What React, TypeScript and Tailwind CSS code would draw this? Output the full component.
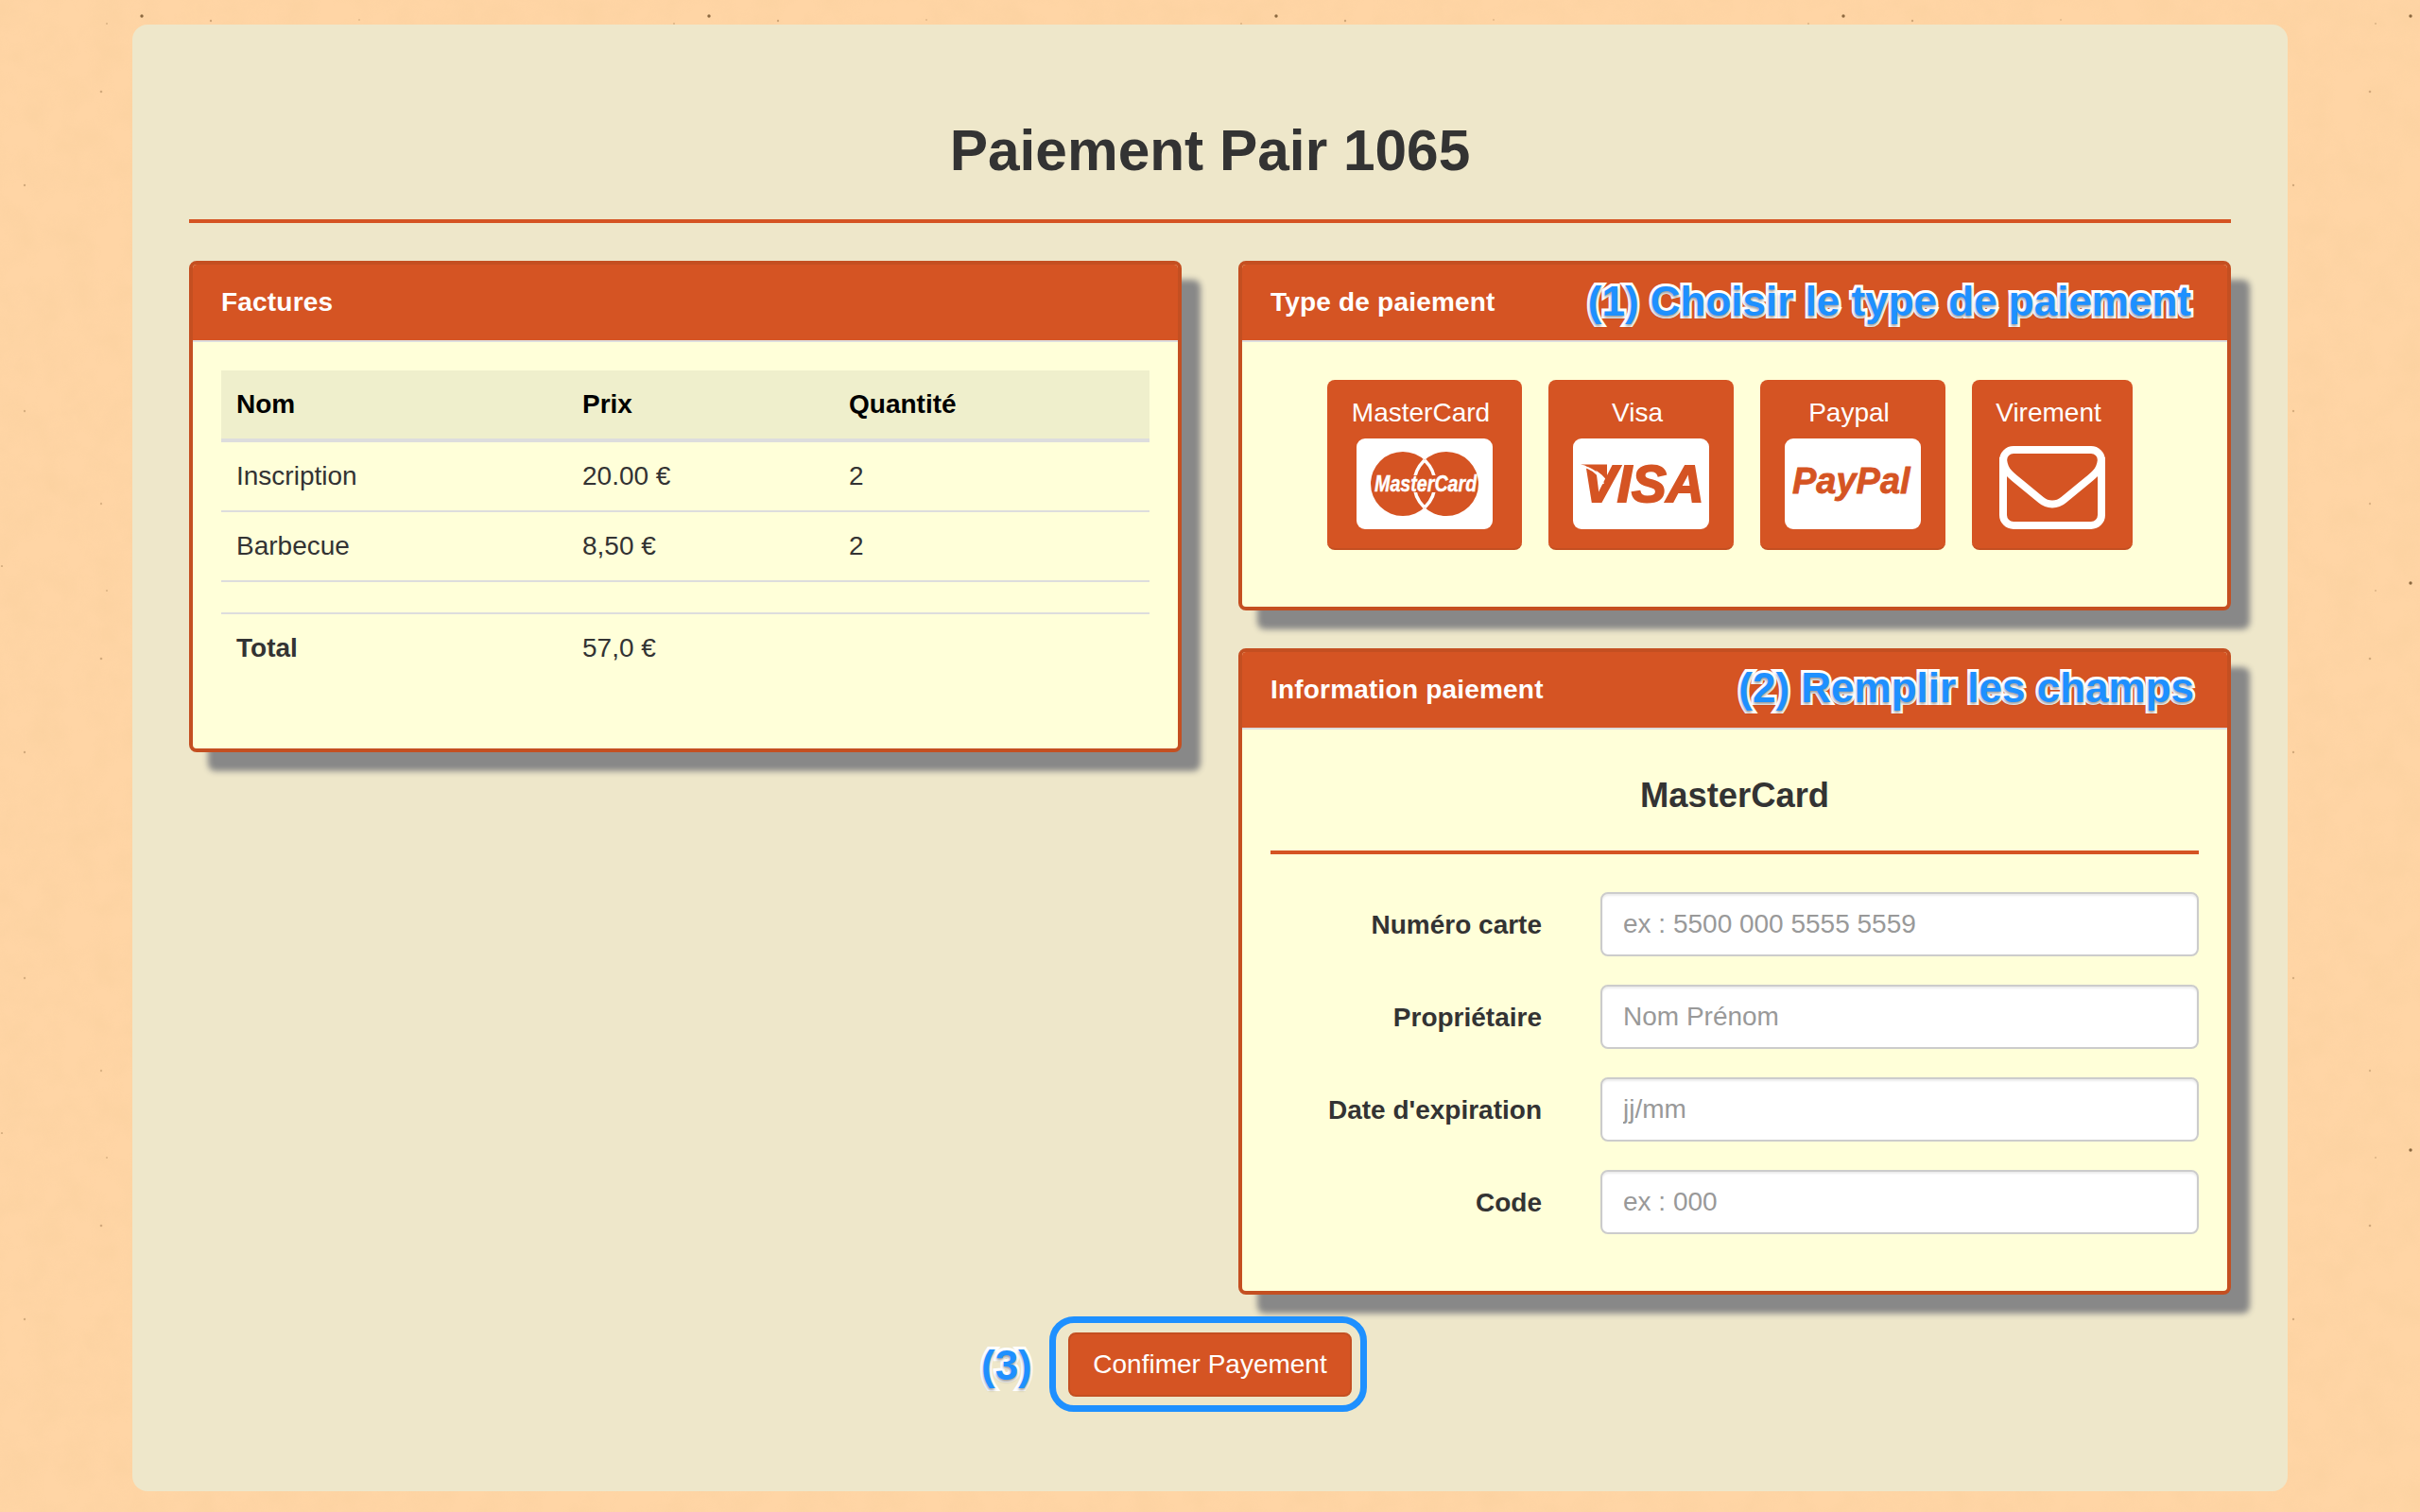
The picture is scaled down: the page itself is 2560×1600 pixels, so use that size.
import React from 'react';

const specks = [
    { x: 150, y: 17, r: 1.7, o: 0.7 },
    { x: 223, y: 22, r: 1.2, o: 0.3 },
    { x: 113, y: 25, r: 1, o: 0.22 },
    { x: 380, y: 21, r: 1, o: 0.18 },
    { x: 107, y: 97, r: 1.3, o: 0.28 },
    { x: 26, y: 196, r: 1.2, o: 0.28 },
    { x: 26, y: 435, r: 1.2, o: 0.25 },
    { x: 107, y: 533, r: 1.2, o: 0.22 },
    { x: 2, y: 599, r: 1.1, o: 0.25 },
];

const PaperBackground = () => (
    <svg className="absolute inset-0 w-full h-full" width="2560" height="1600">
        <defs>
            <pattern id="tile" width="600" height="600" patternUnits="userSpaceOnUse">
                {specks.map((s, idx) => (
                    <circle key={idx} cx={s.x} cy={s.y} r={s.r} fill="#5c3a14" opacity={s.o} />
                ))}
            </pattern>
            <filter id="grain" x="0" y="0" width="100%" height="100%">
                <feTurbulence type="fractalNoise" baseFrequency="0.03" numOctaves="3" seed="4" />
                <feColorMatrix values="0 0 0 0 0.93  0 0 0 0 0.62  0 0 0 0 0.33  1.6 0 0 0 -0.55" />
            </filter>
        </defs>
        <rect width="2560" height="1600" fill="#ffd5a5" />
        <rect width="2560" height="1600" filter="url(#grain)" opacity="0.4" />
        <rect width="2560" height="1600" fill="url(#tile)" />
    </svg>
);

const MasterCardIcon = () => (
    <svg width="144" height="96" viewBox="0 0 144 96">
        <defs>
            <clipPath id="mc-left"><circle cx="49" cy="48" r="34" /></clipPath>
            <clipPath id="mc-right"><circle cx="95" cy="48" r="34" /></clipPath>
        </defs>
        <rect width="144" height="96" rx="9" fill="#fff" />
        <circle cx="49" cy="48" r="34" fill="#d55423" />
        <circle cx="95" cy="48" r="34" fill="#d55423" />
        <circle cx="49" cy="48" r="34" fill="none" stroke="#fff" strokeWidth="3.5" clipPath="url(#mc-right)" />
        <circle cx="95" cy="48" r="34" fill="none" stroke="#fff" strokeWidth="3.5" clipPath="url(#mc-left)" />
        <rect x="44" y="39" width="56" height="18" fill="#d55423" />
        <text transform="translate(19 56) scale(0.82 1)" fontSize="24" fontWeight="700" fontStyle="italic" fill="#fff" stroke="#fff" strokeWidth="0.4">MasterCard</text>
    </svg>
);

const VisaIcon = () => (
    <svg width="144" height="96" viewBox="0 0 144 96">
        <rect width="144" height="96" rx="9" fill="#fff" />
        <text x="10" y="67" fontSize="55" fontWeight="700" fontStyle="italic" fill="#d55423" stroke="#d55423" strokeWidth="2">VISA</text>
        <path d="M8 27.5 L36 27.5 L36 45 C30 36 20 30 8 27.5 Z" fill="#d55423" />
        <path d="M8 29 C20 31 28 37 32 48" fill="none" stroke="#fff" strokeWidth="2" />
    </svg>
);

const PaypalIcon = () => (
    <svg width="144" height="96" viewBox="0 0 144 96">
        <rect width="144" height="96" rx="9" fill="#fff" />
        <text x="8" y="58" fontSize="38" fontWeight="700" fontStyle="italic" fill="#d55423" stroke="#d55423" strokeWidth="0.8">PayPal</text>
    </svg>
);

const EnvelopeIcon = () => (
    <svg width="112" height="88" viewBox="0 0 112 88" fill="none" stroke="#fff" strokeWidth="8">
        <rect x="4" y="4" width="104" height="80" rx="11" />
        <path d="M4 12 C4 24 10 29 16 34 L44 57 C51 63 61 63 68 57 L96 34 C102 29 108 24 108 12" />
    </svg>
);

const paymentTypes = [
    { label: 'MasterCard', width: 'w-[206px]', icon: <MasterCardIcon /> },
    { label: 'Visa', width: 'w-[196px]', icon: <VisaIcon /> },
    { label: 'Paypal', width: 'w-[196px]', icon: <PaypalIcon /> },
    { label: 'Virement', width: 'w-[170px]', icon: <EnvelopeIcon /> },
];

const fields = [
    { label: 'Numéro carte', placeholder: 'ex : 5500 000 5555 5559' },
    { label: 'Propriétaire', placeholder: 'Nom Prénom' },
    { label: "Date d'expiration", placeholder: 'jj/mm' },
    { label: 'Code', placeholder: 'ex : 000' },
];

const noteClass =
    "font-bold text-[44px] leading-[50px] text-[#1e90ff] [-webkit-text-stroke:6px_white] [paint-order:stroke_fill] [text-shadow:0_2px_3px_rgba(0,0,0,0.4)]";

const Panel = ({ title, note, children }: { title: string; note?: React.ReactNode; children: React.ReactNode }) => (
    <div className="bg-[#ffffd9] border-4 border-[#c44f21] rounded-lg shadow-[20px_20px_6px_#888888]">
        <div className="h-[82px] bg-[#d55423] border-b-2 border-[#dddddd] rounded-t-[4px] pl-[30px] flex items-center justify-between">
            <h3 className="text-[28px] font-bold text-white leading-10 tracking-[0.2px]">{title}</h3>
            {note}
        </div>
        {children}
    </div>
);

const App = () => {
    return (
        <div className="relative w-[2560px] h-[1600px] overflow-hidden text-[#333333] text-[28px] leading-10 [font-family:'Liberation_Sans',Arial,sans-serif]">
            <PaperBackground />

            <div className="relative ml-[140px] top-[26px] w-[2280px] h-[1552px] bg-[#eee7ca] rounded-2xl px-[60px] pt-[100px]">
                <h1 className="text-[60.4px] leading-[66px] font-bold text-center">Paiement Pair 1065</h1>
                <div className="h-1 bg-[#d55423] mt-10 mb-10"></div>

                <div className="grid grid-cols-2 gap-[60px] items-start">
                    <Panel title="Factures">
                        <div className="px-[30px] pt-[30px] pb-[70px]">
                            <table className="w-full table-fixed border-separate border-spacing-0">
                                <colgroup>
                                    <col className="w-[366px]" />
                                    <col className="w-[282px]" />
                                    <col />
                                </colgroup>
                                <thead>
                                    <tr className="bg-[#efefcc] text-left text-black">
                                        <th className="px-4 py-4 font-bold border-b-4 border-[#dddddd]">Nom</th>
                                        <th className="px-4 py-4 font-bold border-b-4 border-[#dddddd]">Prix</th>
                                        <th className="px-4 py-4 font-bold border-b-4 border-[#dddddd]">Quantité</th>
                                    </tr>
                                </thead>
                                <tbody>
                                    <tr>
                                        <td className="px-4 py-4 border-b-2 border-[#dddddd]">Inscription</td>
                                        <td className="px-4 py-4 border-b-2 border-[#dddddd]">20.00 €</td>
                                        <td className="px-4 py-4 border-b-2 border-[#dddddd]">2</td>
                                    </tr>
                                    <tr>
                                        <td className="px-4 py-4 border-b-2 border-[#dddddd]">Barbecue</td>
                                        <td className="px-4 py-4 border-b-2 border-[#dddddd]">8,50 €</td>
                                        <td className="px-4 py-4 border-b-2 border-[#dddddd]">2</td>
                                    </tr>
                                    <tr>
                                        <td colSpan={3} className="h-[34px] p-0 border-b-2 border-[#dddddd]"></td>
                                    </tr>
                                    <tr>
                                        <td className="px-4 py-4 font-bold">Total</td>
                                        <td className="px-4 py-4">57,0 €</td>
                                        <td className="px-4 py-4"></td>
                                    </tr>
                                </tbody>
                            </table>
                        </div>
                    </Panel>

                    <div className="flex flex-col gap-10">
                        <Panel title="Type de paiement" note={<span className={`${noteClass} mr-[38px] -translate-y-px`}>(1) Choisir le type de paiement</span>}>
                            <div className="pl-[90px] pt-10 pb-[60px] flex gap-7">
                                {paymentTypes.map((p) => (
                                    <button key={p.label} className={`${p.width} h-[180px] bg-[#d55423] border-b-2 border-[#c44f21] rounded-lg text-white flex flex-col items-center`}>
                                        <span className="mt-[15px] h-10 mb-[7px] -translate-x-1">{p.label}</span>
                                        <span className="h-[96px] flex items-end">{p.icon}</span>
                                    </button>
                                ))}
                            </div>
                        </Panel>

                        <Panel title="Information paiement" note={<span className={`${noteClass} mr-[35px] -translate-y-0.5`}>(2) Remplir les champs</span>}>
                            <div className="px-[30px] pt-[50px] pb-[60px]">
                                <h4 className="text-[36.4px] leading-10 font-bold text-center">MasterCard</h4>
                                <div className="h-1 bg-[#d55423] mt-[38px] mb-10"></div>
                                <div className="flex flex-col gap-[30px]">
                                    {fields.map((f) => (
                                        <div key={f.label} className="flex items-center">
                                            <label className="w-[287px] text-right font-bold translate-y-px">{f.label}</label>
                                            <input
                                                placeholder={f.placeholder}
                                                className="ml-[62px] flex-1 min-w-0 h-[68px] px-[22px] bg-white border-2 border-[#cccccc] rounded-lg shadow-[inset_0_2px_2px_rgba(0,0,0,0.075)] placeholder:text-[#999999] outline-none"
                                            />
                                        </div>
                                    ))}
                                </div>
                            </div>
                        </Panel>
                    </div>
                </div>

                <div className="flex justify-center mt-10">
                    <div className="relative">
                        <button className="w-[300px] h-[68px] bg-[#d55423] border-2 border-[#c44f21] rounded-lg text-white">Confimer Payement</button>
                        <div className="absolute -left-5 -right-4 -top-[17px] -bottom-4 border-[7px] border-[#1e90ff] rounded-[26px]"></div>
                        <span className={`${noteClass} absolute -left-[92px] top-[10px]`}>(3)</span>
                    </div>
                </div>
            </div>
        </div>
    );
};

export default App;
